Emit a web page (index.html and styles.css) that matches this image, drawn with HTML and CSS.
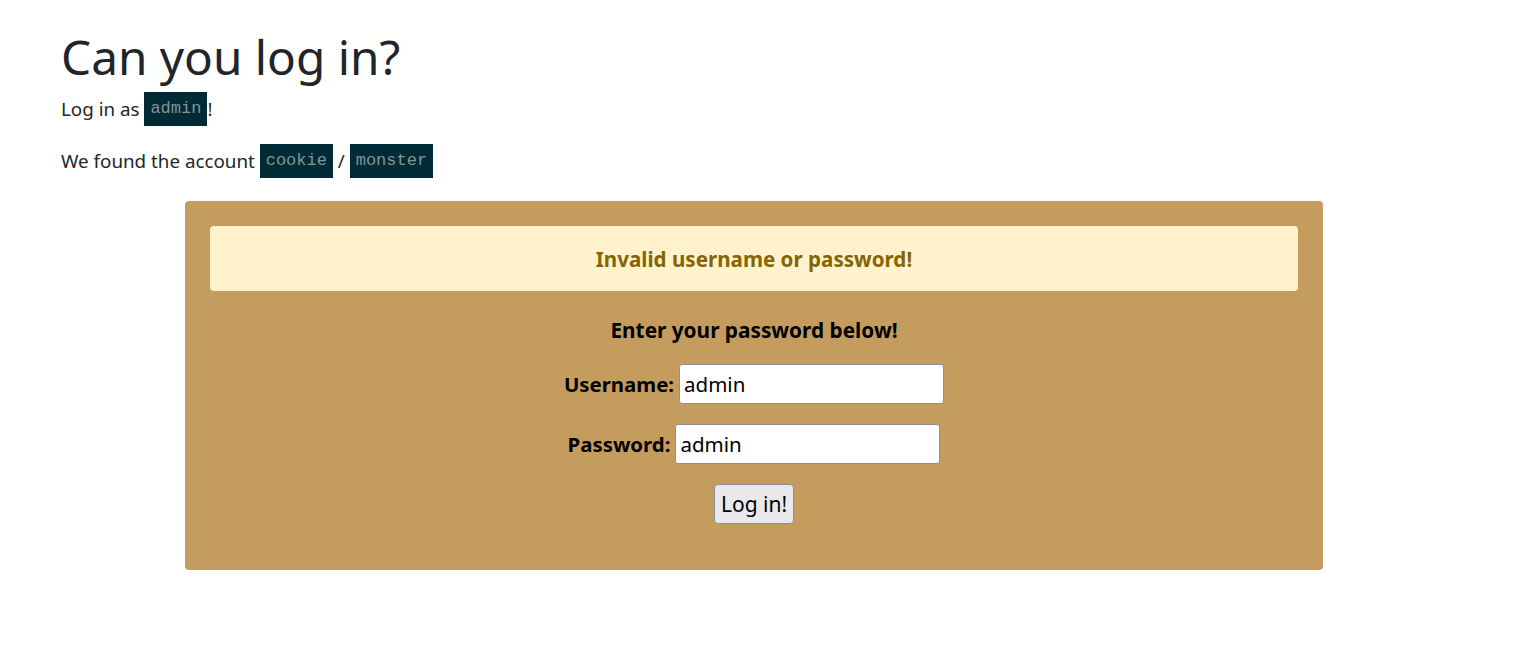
FILE: index.html
```html
<!DOCTYPE html>
<html lang="en">
<head>
<meta charset="utf-8">
<title>Can you log in?</title>
<link rel="stylesheet" href="styles.css">
</head>
<body>
<main class="container">
  <h1 class="title">Can you log in?</h1>
  <p class="line">Log in as <code class="code">admin</code>!</p>
  <p class="line">We found the account <code class="code">cookie</code> / <code class="code">monster</code></p>
  <section class="panel">
    <div class="alert">Invalid username or password!</div>
    <form class="form">
      <div class="prompt">Enter your password below!</div>
      <div class="row"><label class="label" for="u">Username:</label> <input class="input" id="u" type="text" value="admin"></div>
      <div class="row"><label class="label" for="p">Password:</label> <input class="input" id="p" type="text" value="admin"></div>
      <div class="row"><button class="btn" type="button">Log in!</button></div>
    </form>
  </section>
</main>
</body>
</html>
```
FILE: styles.css
```css
html, body {
  margin: 0;
  padding: 0;
  background: #fff;
}
body {
  font-family: "Noto Sans", "Open Sans", sans-serif;
  color: #212529;
  font-size: 18.8px;
}
.container {
  width: 1386px;
  margin: 0 0 0 61px;
  padding-top: 28px;
}
.title {
  font-size: 47.7px;
  font-weight: 400;
  line-height: 1.2;
  margin: 0 0 7px 0;
}
.line {
  margin: 0 0 18px 0;
  line-height: 34px;
}
.code {
  display: inline-block;
  background: #002b36;
  color: #839496;
  font-family: "Liberation Mono", monospace;
  font-size: 17px;
  line-height: 34px;
  padding: 0 6px;
  vertical-align: top;
}
.panel {
  box-sizing: border-box;
  width: 1138px;
  margin: 23px 0 0 124px;
  background: #c49c5d;
  border-radius: 4px;
  padding: 25px 25px 46px 25px;
}
.alert {
  background: #fff2cc;
  border-radius: 4px;
  height: 65px;
  display: flex;
  align-items: center;
  justify-content: center;
  color: #856404;
  font-weight: 700;
  font-size: 20.6px;
}
.form {
  display: flex;
  flex-direction: column;
  align-items: center;
  padding-top: 24px;
  color: #000;
}
.prompt {
  font-weight: 700;
  font-size: 20.8px;
  line-height: 30px;
  margin-bottom: 19px;
}
.row {
  display: flex;
  align-items: center;
  gap: 5px;
  margin-bottom: 20px;
}
.row:last-child {
  margin-bottom: 0;
}
.label {
  font-weight: 700;
  font-size: 20.4px;
}
.input {
  box-sizing: border-box;
  width: 265px;
  height: 40px;
  border: 1px solid #8f8f9d;
  border-radius: 3px;
  background: #fff;
  font-family: "Noto Sans", sans-serif;
  font-size: 20.5px;
  padding: 0 4px;
  color: #000;
}
.btn {
  box-sizing: border-box;
  height: 40px;
  padding: 0 6px;
  background: #e9e9ed;
  border: 1px solid #8f8f9d;
  border-radius: 4px;
  font-family: "Noto Sans", sans-serif;
  font-size: 21px;
  color: #000;
}
```
